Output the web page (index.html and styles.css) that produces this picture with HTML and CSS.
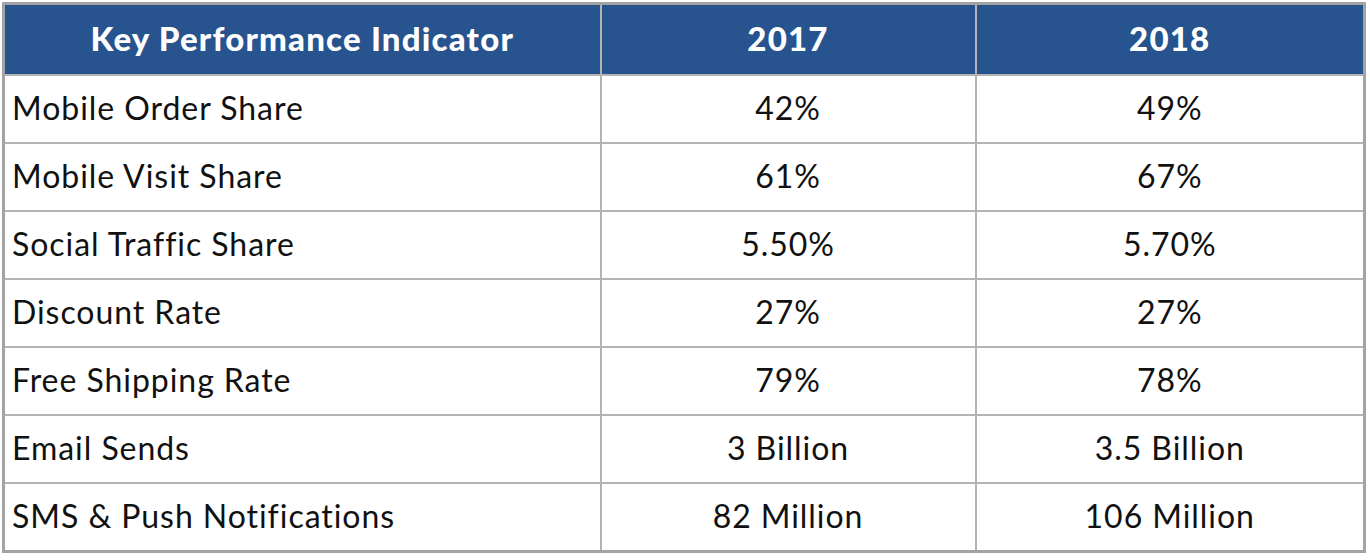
FILE: index.html
```html
<!DOCTYPE html>
<html>
<head>
<meta charset="utf-8">
<link rel="stylesheet" href="styles.css">
</head>
<body>
<table class="kpi">
  <colgroup>
    <col class="c1"><col class="c2"><col class="c3">
  </colgroup>
  <thead>
    <tr><th>Key Performance Indicator</th><th>2017</th><th>2018</th></tr>
  </thead>
  <tbody>
    <tr><td>Mobile Order Share</td><td>42%</td><td>49%</td></tr>
    <tr><td>Mobile Visit Share</td><td>61%</td><td>67%</td></tr>
    <tr><td>Social Traffic Share</td><td>5.50%</td><td>5.70%</td></tr>
    <tr><td>Discount Rate</td><td>27%</td><td>27%</td></tr>
    <tr><td>Free Shipping Rate</td><td>79%</td><td>78%</td></tr>
    <tr><td>Email Sends</td><td>3 Billion</td><td>3.5 Billion</td></tr>
    <tr><td>SMS &amp; Push Notifications</td><td>82 Million</td><td>106 Million</td></tr>
  </tbody>
</table>
</body>
</html>
```
FILE: styles.css
```css
html, body {
  margin: 0;
  padding: 0;
  background: #ffffff;
}
body {
  padding: 2px 0 0 2px;
  font-family: "Lato", "Liberation Sans", sans-serif;
}
.kpi {
  border-collapse: collapse;
  border: 3px solid #a3a3a3;
  width: 1364px;
  table-layout: fixed;
}
.c1 { width: 597px; }
.c2 { width: 375px; }
.c3 { width: auto; }
.kpi th, .kpi td {
  border: 2px solid #b3b3b3;
  height: 66px;
  padding: 0 0 3px 0;
  vertical-align: middle;
}
.kpi thead th {
  background: #27538f;
  color: #ffffff;
  font-weight: 900;
  font-size: 33px;
  letter-spacing: 1.2px;
  text-align: center;
  height: 66px;
  border-color: #b3b3b3;
}
.kpi td {
  color: #111111;
  font-size: 32px;
  letter-spacing: 0.95px;
  text-align: center;
  height: 63px;
}
.kpi td:first-child {
  text-align: left;
  padding-left: 7px;
}
```
